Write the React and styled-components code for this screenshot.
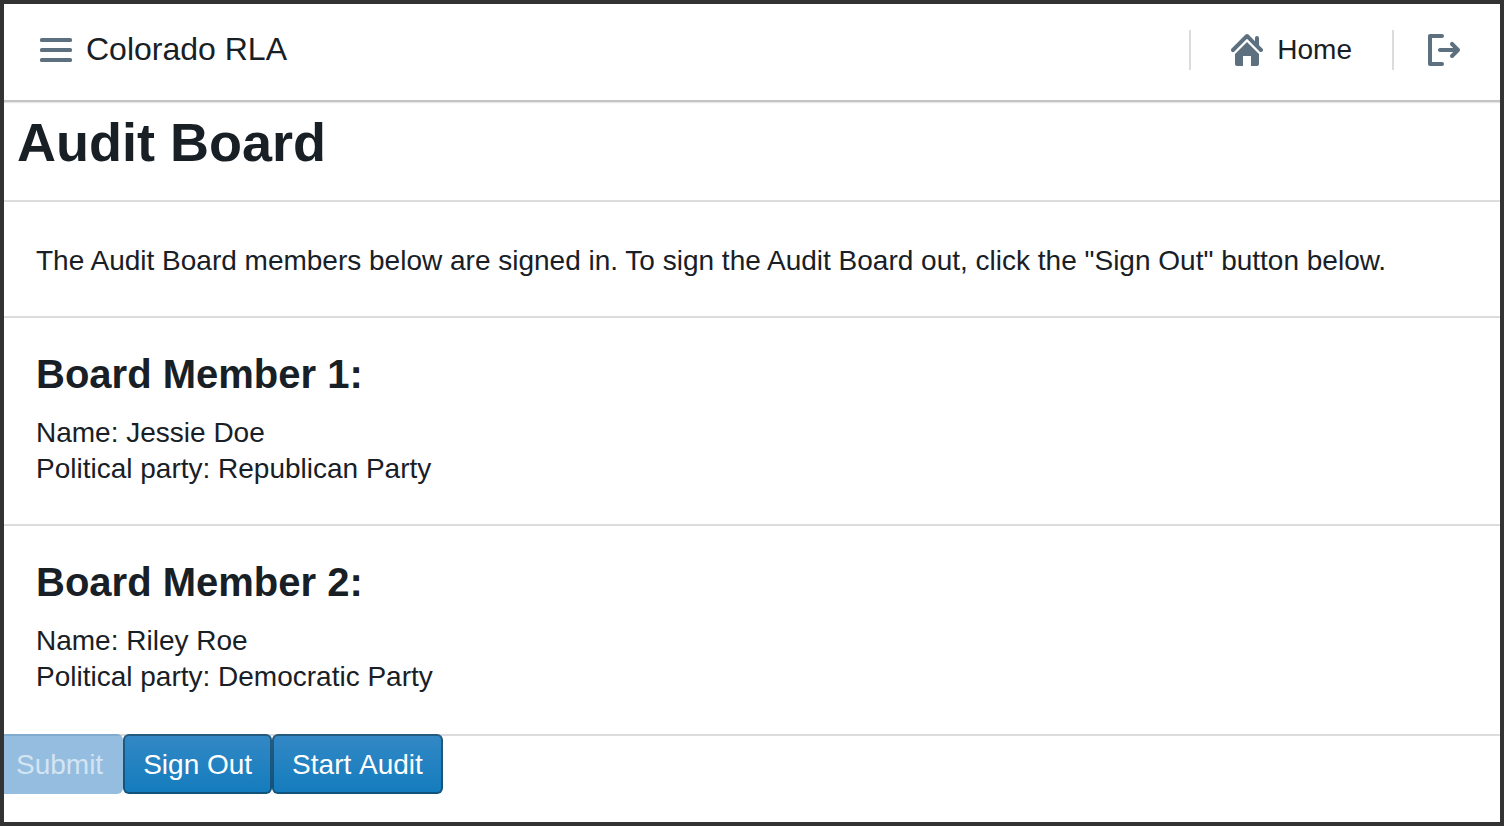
import React from "react";
import styled, { createGlobalStyle } from "styled-components";

const GlobalStyle = createGlobalStyle`
  *, *::before, *::after { box-sizing: border-box; }
  body {
    margin: 0;
    background: #ffffff;
    color: #182026;
    font-family: "Liberation Sans", Arial, sans-serif;
    font-size: 28px;
    line-height: 36px;
  }
`;

const Frame = styled.div`
  min-height: 100vh;
  border: 4px solid #333333;
  background: #ffffff;
  overflow: hidden;
`;

const Navbar = styled.header`
  display: flex;
  align-items: center;
  justify-content: space-between;
  height: 98px;
  padding: 0 40px 4px 36px;
  border-bottom: 2px solid #c3c4c5;
  box-shadow: 0 1px 1px rgba(16, 22, 26, 0.1);
`;

const NavGroup = styled.nav`
  display: flex;
  align-items: center;
`;

const Brand = styled.div`
  display: flex;
  align-items: center;
  gap: 14px;
`;

const AppName = styled.span`
  padding-bottom: 2px;
  font-size: 32px;
`;

const IconButton = styled.button`
  display: flex;
  padding: 0;
  border: 0;
  background: none;
  cursor: pointer;
`;

const NavLink = styled.a`
  display: flex;
  align-items: center;
  gap: 14px;
  color: inherit;
  text-decoration: none;
`;

const Divider = styled.span`
  width: 2px;
  height: 40px;
  margin: ${(p) => (p.$first ? "0 40px 0 0" : "0 34px 0 40px")};
  background: #dbdcdd;
`;

const IconSvg = styled.svg`
  display: block;
  width: 32px;
  height: 32px;
  fill: #5c7080;
`;

const Icon = ({ children }) => (
  <IconSvg viewBox="0 0 16 16" aria-hidden="true">
    {children}
  </IconSvg>
);

const Title = styled.h1`
  margin: 0;
  padding: 8px 13px 26px;
  border-bottom: 2px solid #dbdcdd;
  font-size: 54px;
  line-height: 64px;
`;

const Panel = styled.section`
  padding: ${(p) => (p.$member ? "32px" : "41px")} 32px ${(p) => (p.$last ? "39px" : "37px")};
  border-bottom: 2px solid #dbdcdd;
`;

const MemberHeading = styled.h2`
  margin: 0 0 17px;
  font-size: 40px;
  line-height: 48px;
`;

const Actions = styled.div`
  display: flex;
  position: relative;
  margin: -2px 0 0 -8px;
`;

const Button = styled.button`
  height: 60px;
  padding: 1px 18px 0;
  border: 2px solid rgba(16, 22, 26, 0.4);
  border-radius: 6px;
  background: linear-gradient(to bottom, #3488c5, #137cbd) border-box;
  color: #ffffff;
  font: inherit;
  font-kerning: none;
  cursor: pointer;

  &:disabled {
    border-color: transparent;
    background: rgba(41, 124, 193, 0.5);
    color: #d3e4f2;
    cursor: default;
  }
`;

const members = [
  { name: "Jessie Doe", party: "Republican Party" },
  { name: "Riley Roe", party: "Democratic Party" },
];

export default function App() {
  return (
    <Frame>
      <GlobalStyle />
      <Navbar>
        <Brand>
          <IconButton type="button" aria-label="Menu">
            <Icon>
              <rect y="2" width="16" height="2" rx="0.8" />
              <rect y="7" width="16" height="2" rx="0.8" />
              <rect y="12" width="16" height="2" rx="0.8" />
            </Icon>
          </IconButton>
          <AppName>Colorado RLA</AppName>
        </Brand>
        <NavGroup>
          <Divider $first />
          <NavLink href="#home">
            <Icon>
              <path d="M2 10v5c0 .55.45 1 1 1h3v-5h4v5h3c.55 0 1-.45 1-1v-5L8 4l-6 6zm13.71-2.71L14 5.59V2c0-.55-.45-1-1-1s-1 .45-1 1v1.59L8.71.29C8.53.11 8.28 0 8 0s-.53.11-.71.29l-7 7a1.003 1.003 0 0 0 1.42 1.42L8 2.41l6.29 6.29c.18.19.43.3.71.3a1.003 1.003 0 0 0 .71-1.71z" />
            </Icon>
            Home
          </NavLink>
          <Divider />
          <IconButton type="button" aria-label="Log out">
            <Icon>
              <path d="M7 14H2V2h5c.55 0 1-.45 1-1s-.45-1-1-1H1C.45 0 0 .45 0 1v14c0 .55.45 1 1 1h6c.55 0 1-.45 1-1s-.45-1-1-1zm8.71-6.71l-3-3a1.003 1.003 0 0 0-1.42 1.42L12.59 7H6c-.55 0-1 .45-1 1s.45 1 1 1h6.59l-1.29 1.29c-.19.18-.3.43-.3.71a1.003 1.003 0 0 0 1.71.71l3-3c.18-.18.29-.43.29-.71s-.11-.53-.29-.71z" />
            </Icon>
          </IconButton>
        </NavGroup>
      </Navbar>
      <main>
        <Title>Audit Board</Title>
        <Panel>
          The Audit Board members below are signed in. To sign the Audit Board out, click the "Sign Out" button below.
        </Panel>
        {members.map((member, i) => (
          <Panel key={member.name} $member $last={i === members.length - 1}>
            <MemberHeading>{`Board Member ${i + 1}:`}</MemberHeading>
            <div>{`Name: ${member.name}`}</div>
            <div>{`Political party: ${member.party}`}</div>
          </Panel>
        ))}
        <Actions>
          <Button type="button" disabled>Submit</Button>
          <Button type="button">Sign Out</Button>
          <Button type="button">Start Audit</Button>
        </Actions>
      </main>
    </Frame>
  );
}
